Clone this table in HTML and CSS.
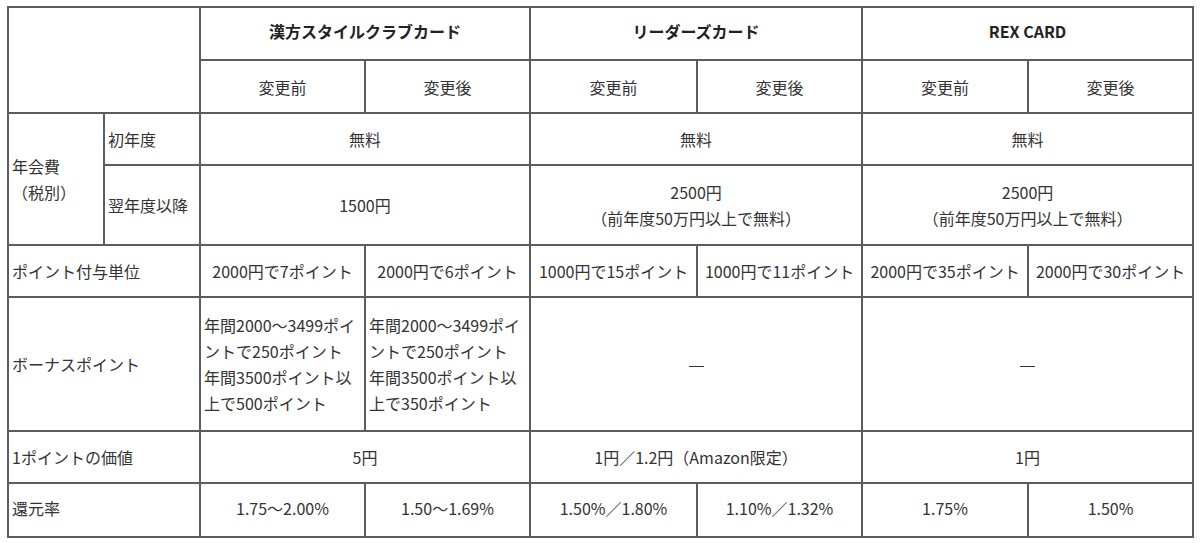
FILE: index.html
```html
<!DOCTYPE html>
<html lang="ja">
<head>
<meta charset="utf-8">
<title>カード比較</title>
<link rel="stylesheet" href="styles.css">
</head>
<body>
<table class="cmp">
  <colgroup>
    <col class="c-lab"><col class="c-lab">
    <col class="c-a"><col class="c-a">
    <col class="c-b"><col class="c-a">
    <col class="c-c"><col class="c-a">
  </colgroup>
  <tr class="r-h1">
    <td colspan="2" rowspan="2"></td>
    <th colspan="2">漢方スタイルクラブカード</th>
    <th colspan="2">リーダーズカード</th>
    <th colspan="2">REX CARD</th>
  </tr>
  <tr class="r-h2">
    <td>変更前</td><td>変更後</td>
    <td>変更前</td><td>変更後</td>
    <td>変更前</td><td>変更後</td>
  </tr>
  <tr class="r-fee1">
    <td rowspan="2" class="lab">年会費<br>（税別）</td>
    <td class="lab">初年度</td>
    <td colspan="2">無料</td>
    <td colspan="2">無料</td>
    <td colspan="2">無料</td>
  </tr>
  <tr class="r-fee2">
    <td class="lab">翌年度以降</td>
    <td colspan="2">1500円</td>
    <td colspan="2">2500円<br>（前年度50万円以上で無料）</td>
    <td colspan="2">2500円<br>（前年度50万円以上で無料）</td>
  </tr>
  <tr class="r-pt">
    <td colspan="2" class="lab">ポイント付与単位</td>
    <td>2000円で7ポイント</td>
    <td>2000円で6ポイント</td>
    <td>1000円で15ポイント</td>
    <td>1000円で11ポイント</td>
    <td>2000円で35ポイント</td>
    <td>2000円で30ポイント</td>
  </tr>
  <tr class="r-bonus">
    <td colspan="2" class="lab">ボーナスポイント</td>
    <td class="left">年間2000～3499ポイ<br>ントで250ポイント<br>年間3500ポイント以<br>上で500ポイント</td>
    <td class="left">年間2000～3499ポイ<br>ントで250ポイント<br>年間3500ポイント以<br>上で350ポイント</td>
    <td colspan="2"><span class="dash"></span></td>
    <td colspan="2"><span class="dash"></span></td>
  </tr>
  <tr class="r-val">
    <td colspan="2" class="lab">1ポイントの価値</td>
    <td colspan="2">5円</td>
    <td colspan="2">1円／1.2円（Amazon限定）</td>
    <td colspan="2">1円</td>
  </tr>
  <tr class="r-rate">
    <td colspan="2" class="lab">還元率</td>
    <td>1.75～2.00%</td>
    <td>1.50～1.69%</td>
    <td>1.50%／1.80%</td>
    <td>1.10%／1.32%</td>
    <td>1.75%</td>
    <td>1.50%</td>
  </tr>
</table>
</body>
</html>
```

FILE: styles.css
```css
html, body {
  margin: 0;
  padding: 0;
  background: #fff;
}

body {
  padding: 6px 0 0 7px;
  font-family: "Noto Sans CJK JP", "Noto Sans", sans-serif;
  font-size: 16px;
  color: #333;
}

.cmp {
  border-collapse: collapse;
  table-layout: fixed;
  width: 1187px;
}

.c-lab { width: 96px; }
.c-a { width: 165px; }
.c-b { width: 167px; }
.c-c { width: 166px; }

.cmp th,
.cmp td {
  border: 2px solid #5c5c5c;
  padding: 0 3px;
  text-align: center;
  vertical-align: middle;
  line-height: 26px;
  white-space: nowrap;
  overflow: hidden;
}

.cmp th {
  font-weight: bold;
  color: #222;
  padding-bottom: 5px;
}

.cmp td.lab,
.cmp td.left {
  text-align: left;
}

.dash {
  display: inline-block;
  width: 15px;
  height: 1px;
  background: #333;
  vertical-align: middle;
}

.r-h1 { height: 53px; }
.r-h2 { height: 53px; }
.r-fee1 { height: 52px; }
.r-fee2 { height: 80px; }
.r-pt { height: 52px; }
.r-bonus { height: 134px; }
.r-val { height: 52px; }
.r-rate { height: 54px; }

.r-rate td {
  padding-bottom: 5px;
}
```
